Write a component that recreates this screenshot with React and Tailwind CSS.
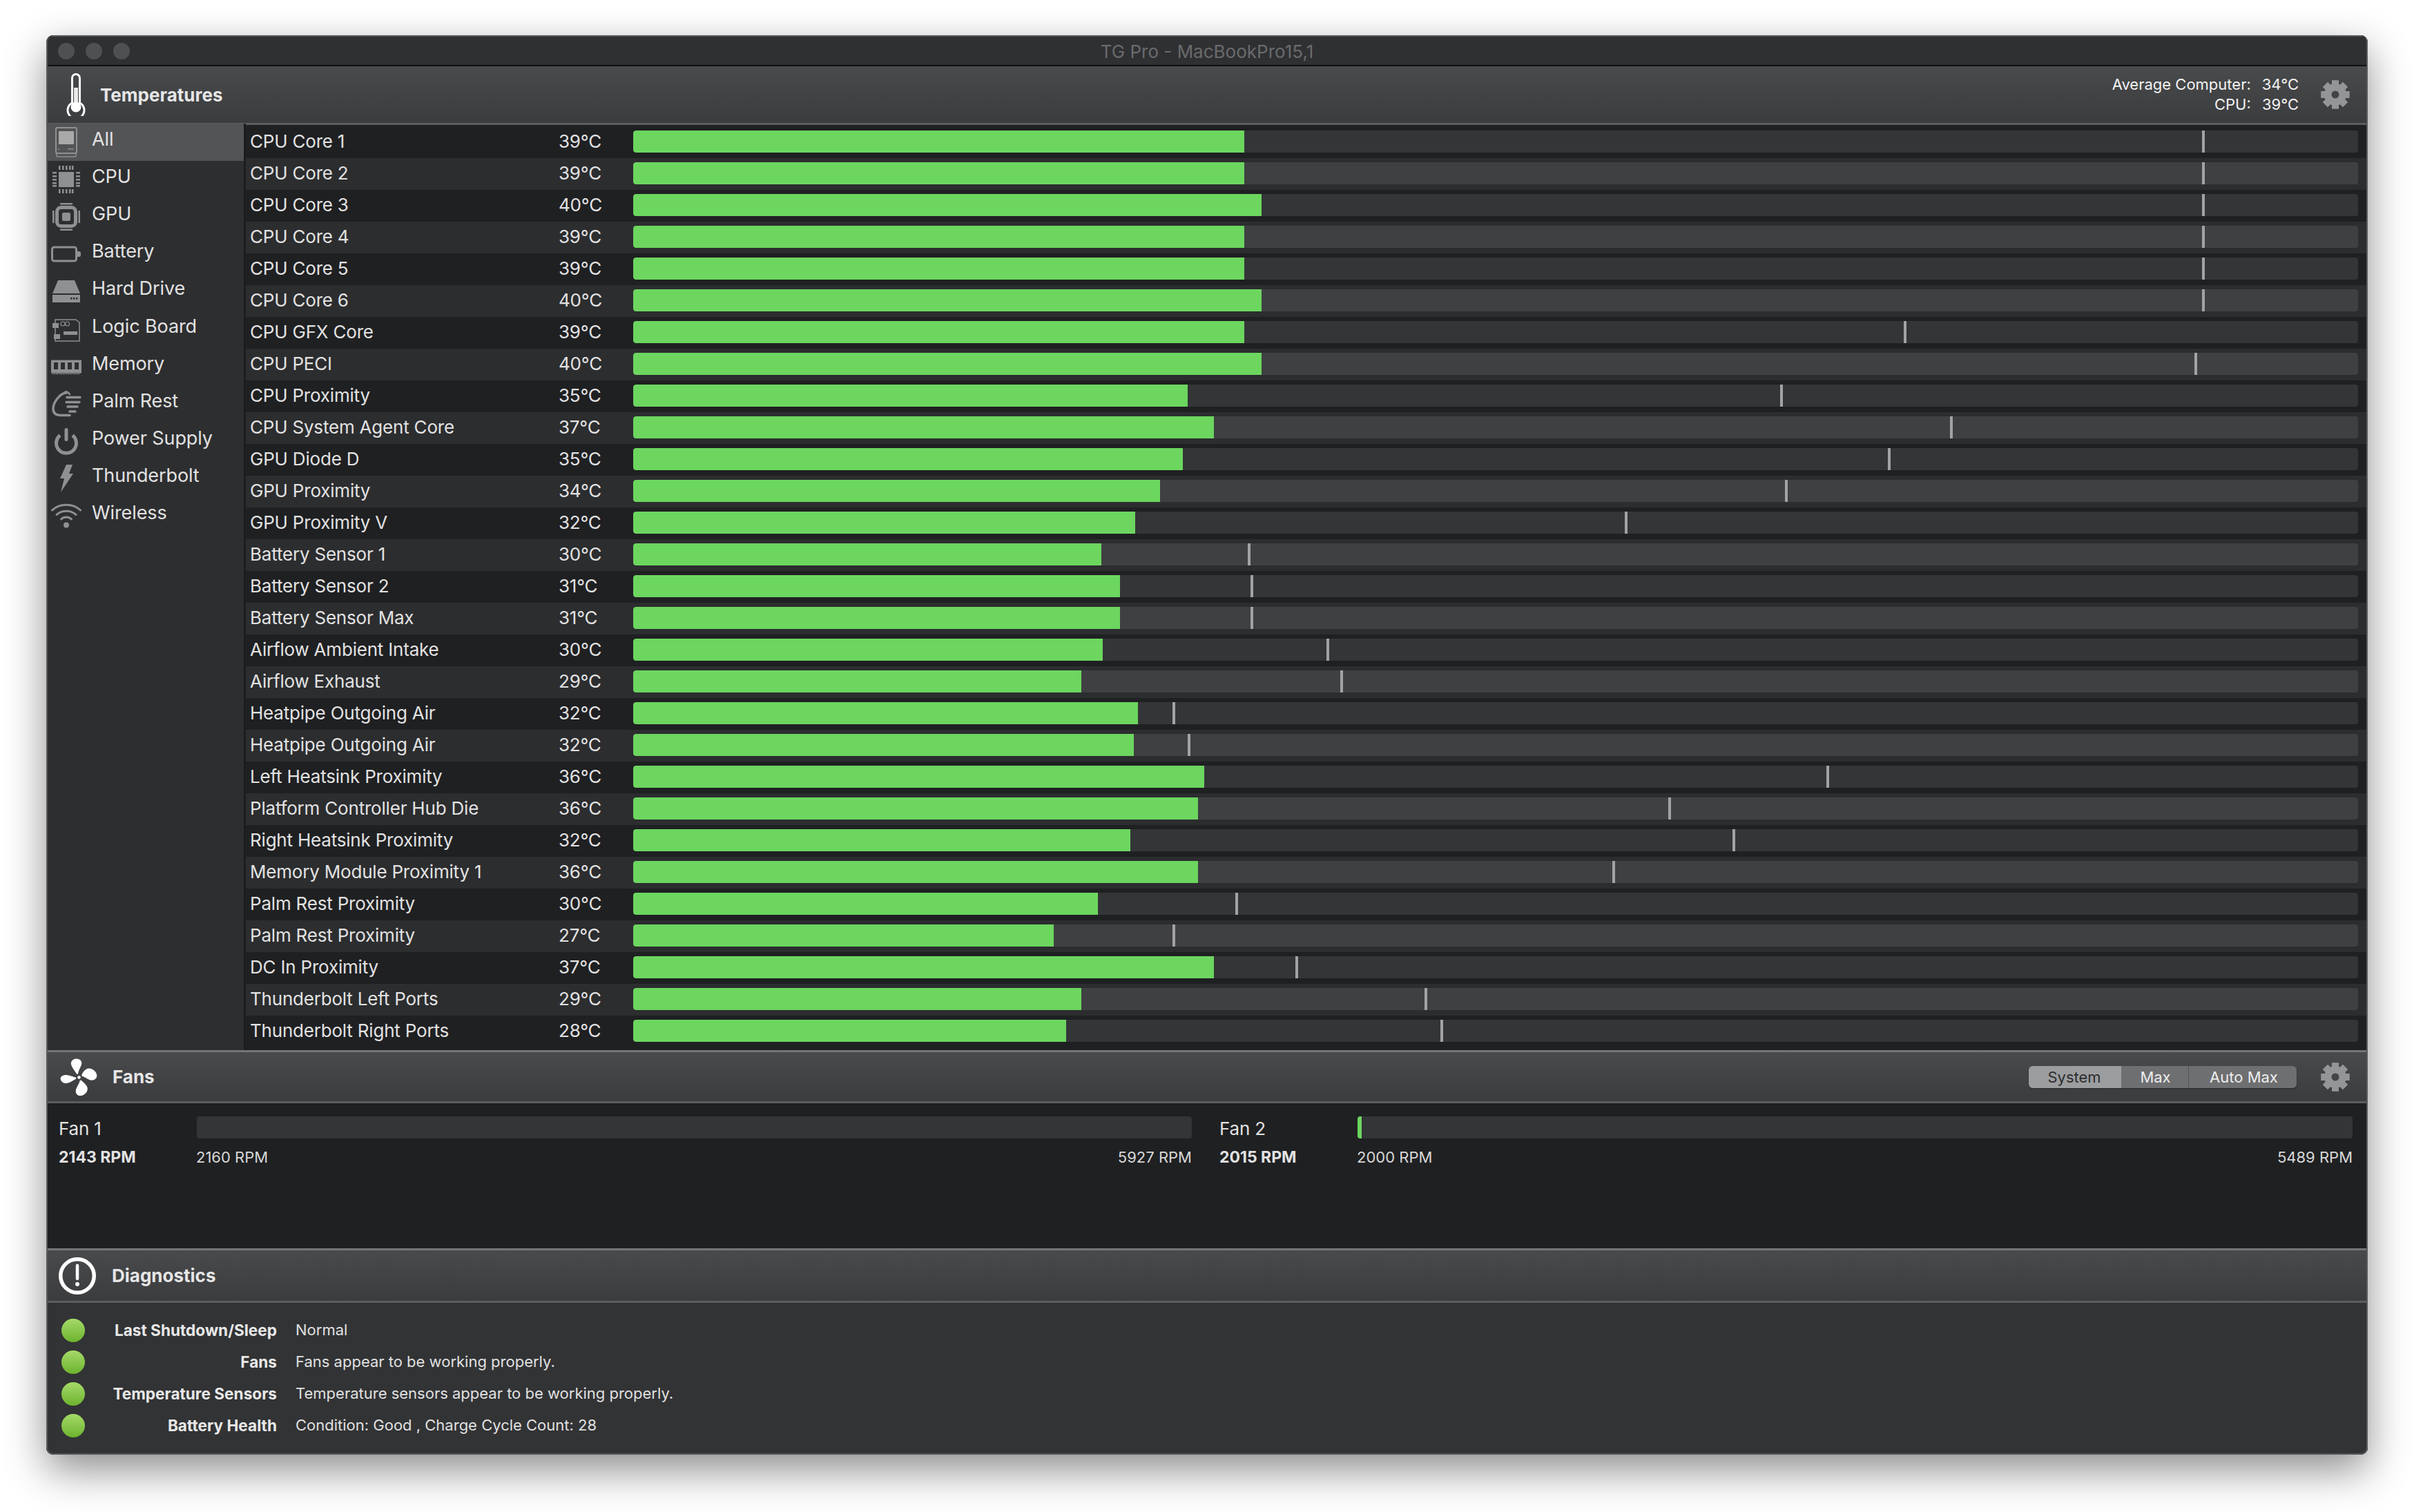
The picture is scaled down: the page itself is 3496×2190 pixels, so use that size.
import React from "react";

const rows = [
  ["CPU Core 1","39°C",808,1431],["CPU Core 2","39°C",808,1431],["CPU Core 3","40°C",819,1431],
  ["CPU Core 4","39°C",808,1431],["CPU Core 5","39°C",808,1431],["CPU Core 6","40°C",819,1431],
  ["CPU GFX Core","39°C",808,1237],["CPU PECI","40°C",819,1426],["CPU Proximity","35°C",771,1157],
  ["CPU System Agent Core","37°C",788,1267],["GPU Diode D","35°C",768,1227],["GPU Proximity","34°C",753,1160],
  ["GPU Proximity V","32°C",737,1056],["Battery Sensor 1","30°C",715,811],["Battery Sensor 2","31°C",727,813],
  ["Battery Sensor Max","31°C",727,813],["Airflow Ambient Intake","30°C",716,862],["Airflow Exhaust","29°C",702,871],
  ["Heatpipe Outgoing Air","32°C",739,762],["Heatpipe Outgoing Air","32°C",736,772],["Left Heatsink Proximity","36°C",782,1187],
  ["Platform Controller Hub Die","36°C",778,1084],["Right Heatsink Proximity","32°C",734,1126],["Memory Module Proximity 1","36°C",778,1048],
  ["Palm Rest Proximity","30°C",713,803],["Palm Rest Proximity","27°C",684,762],["DC In Proximity","37°C",788,842],
  ["Thunderbolt Left Ports","29°C",702,926],["Thunderbolt Right Ports","28°C",692,936],
];

const C = "#8f9092";
const Ic = ({ children }) => (
  <svg width="44" height="44" viewBox="0 0 44 44" fill="none" className="shrink-0">{children}</svg>
);
const Rep = ({ xs, y, w, h }) => xs.map((x) => <rect key={x} x={x} y={y} width={w} height={h} fill={C} />);

const icons = {
  All: (
    <Ic>
      <rect x="7" y="1" width="30" height="37" rx="2" stroke={C} strokeWidth="2" />
      <rect x="8" y="38" width="28" height="5" rx="1" stroke={C} strokeWidth="1.5" />
      <rect x="11" y="6" width="22" height="19" rx="1" fill="#a9a9aa" />
      <rect x="10" y="31" width="2" height="1.5" fill={C} />
      <rect x="24" y="31" width="9" height="1.5" fill={C} />
    </Ic>
  ),
  CPU: (
    <Ic>
      <rect x="11" y="11" width="22" height="22" fill={C} />
      <Rep xs={[11, 16, 21, 26, 30]} y="2" w="2.5" h="6" />
      <Rep xs={[11, 16, 21, 26, 30]} y="36" w="2.5" h="6" />
      {[12, 17, 22, 27, 31].map((y) => (
        <g key={y}>
          <rect x="2" y={y - 1} width="6" height="2.5" fill={C} />
          <rect x="36" y={y - 1} width="6" height="2.5" fill={C} />
        </g>
      ))}
    </Ic>
  ),
  GPU: (
    <Ic>
      <rect x="8.5" y="8.5" width="27" height="27" rx="6" stroke={C} strokeWidth="5" />
      <rect x="16" y="16" width="12" height="12" rx="2" fill={C} />
      <rect x="13" y="2" width="18" height="2.5" fill={C} />
      <rect x="13" y="39.5" width="18" height="2.5" fill={C} />
      <rect x="2" y="13" width="2.5" height="18" fill={C} />
      <rect x="39.5" y="13" width="2.5" height="18" fill={C} />
    </Ic>
  ),
  Battery: (
    <Ic>
      <rect x="1.5" y="12" width="35" height="20" rx="3" stroke={C} strokeWidth="3" />
      <path d="M38 18h2.5a2.5 2.5 0 0 1 2.5 2.5v3a2.5 2.5 0 0 1-2.5 2.5H38z" fill={C} />
    </Ic>
  ),
  "Hard Drive": (
    <Ic>
      <path d="M10 6h24l8 19H2z" fill={C} />
      <rect x="2" y="27" width="40" height="11" fill={C} />
      <rect x="28" y="31" width="2.5" height="2.5" fill="#2d2e30" />
      <rect x="32" y="31" width="2.5" height="2.5" fill="#2d2e30" />
      <rect x="36" y="31" width="2.5" height="2.5" fill="#2d2e30" />
    </Ic>
  ),
  "Logic Board": (
    <Ic>
      <path d="M6 8h30l5 4v27H6z" stroke={C} strokeWidth="1.5" />
      <rect x="2" y="13" width="9" height="7" fill={C} />
      <rect x="4" y="29" width="9" height="7" fill={C} />
      <circle cx="17" cy="14" r="3" stroke={C} strokeWidth="1.2" />
      <circle cx="23.5" cy="14" r="3" stroke={C} strokeWidth="1.2" />
      <rect x="18" y="25" width="20" height="5" fill={C} />
    </Ic>
  ),
  Memory: (
    <Ic>
      <path d="M0 12.5h44v19H0z" fill={C} />
      <rect x="4" y="16" width="6" height="10" fill="#2d2e30" />
      <rect x="14" y="16" width="6" height="10" fill="#2d2e30" />
      <rect x="24" y="16" width="6" height="10" fill="#2d2e30" />
      <rect x="34" y="16" width="6" height="10" fill="#2d2e30" />
      <path d="M2 32.5h40" stroke={C} strokeWidth="1.5" strokeDasharray="1.5 1" />
    </Ic>
  ),
  "Palm Rest": (
    <Ic>
      <path d="M22 6C14 6 3 19 3 29c0 7 5 9.5 11 9.5h13" stroke={C} strokeWidth="3.5" strokeLinecap="round" />
      <path d="M19 6.5c1-2 3-2.5 5-1.5l3 3" stroke={C} strokeWidth="2.5" strokeLinecap="round" />
      <path d="M23 12.5h19M22 19.5h19M24 26h14M27 33h8" stroke={C} strokeWidth="3.5" strokeLinecap="round" />
    </Ic>
  ),
  "Power Supply": (
    <Ic>
      <path d="M13 13.5a14.5 14.5 0 1 0 18 0" stroke={C} strokeWidth="5" strokeLinecap="butt" />
      <rect x="19.5" y="3" width="5" height="19" rx="2.5" fill={C} />
    </Ic>
  ),
  Thunderbolt: (
    <Ic>
      <path d="M22 2h9l-5 13h6L14 42l5-20h-6z" fill={C} />
    </Ic>
  ),
  Wireless: (
    <Ic>
      <path d="M1.5 14C12 3.5 32 3.5 42.5 14" stroke={C} strokeWidth="3" strokeLinecap="round" />
      <path d="M8 20.5C15 13.5 29 13.5 36 20.5" stroke={C} strokeWidth="3" strokeLinecap="round" />
      <path d="M14.5 27c4-4 11-4 15 0" stroke={C} strokeWidth="3" strokeLinecap="round" />
      <circle cx="22" cy="35.5" r="4" fill={C} />
    </Ic>
  ),
};

const Gear = () => (
  <svg width="42" height="42" viewBox="0 0 42 42" className="shrink-0">
    <g fill="#949597">
      {[0, 45, 90, 135, 180, 225, 270, 315].map((a) => (
        <rect key={a} x="16" y="0.5" width="10" height="41" transform={`rotate(${a} 21 21)`} />
      ))}
      <circle cx="21" cy="21" r="16" />
    </g>
    <circle cx="21" cy="21" r="5.5" fill="#434446" />
  </svg>
);

const Thermo = () => (
  <svg width="28" height="62" viewBox="0 0 28 62" fill="none" className="shrink-0">
    <path d="M8.5 7a5.5 5.5 0 0 1 11 0v36a12 12 0 1 1-11 0z" stroke="#fff" strokeWidth="3" />
    <rect x="11" y="21" width="6" height="26" fill="#e9e9e9" />
    <circle cx="14" cy="49" r="7.5" fill="#fff" />
  </svg>
);

const Fan = () => (
  <svg width="57" height="58" viewBox="30 15 170 175" fill="#fff" className="shrink-0">
    <path d="M108 90C100 75 85 60 83 45C82 30 95 22 110 23C125 24 133 35 128 50C124 62 115 75 113 90Z" />
    <path d="M130 92C135 80 145 68 158 65C175 62 197 80 196 98C195 112 178 120 165 115C152 110 140 100 130 98Z" />
    <path d="M128 117C140 130 156 140 155 155C154 172 135 186 120 184C105 182 100 165 106 152C112 140 120 128 122 117Z" />
    <path d="M105 110C92 118 78 128 62 130C48 131 36 120 37 108C38 96 55 92 68 94C82 96 95 102 105 105Z" />
    <circle cx="118" cy="104" r="7" />
  </svg>
);

const Warn = () => (
  <svg width="54" height="54" viewBox="0 0 54 54" fill="none" className="shrink-0">
    <circle cx="27" cy="27" r="24.25" stroke="#fff" strokeWidth="5.5" />
    <path d="M27 12v19" stroke="#fff" strokeWidth="4.5" strokeLinecap="round" />
    <circle cx="27" cy="39" r="3" fill="#fff" />
  </svg>
);

const headerBg = "bg-gradient-to-b from-[#484a4c] to-[#3b3c3e]";
const TITLE = "font-bold text-[26px] text-[#e6e6e6]";

export default function App() {
  return (
    <div
      className="h-[2190px] w-[3496px] overflow-hidden bg-white pl-[67px] pt-[51px] text-[#e4e4e4]"
      style={{ fontFamily: "Inter, 'Liberation Sans', sans-serif" }}
    >
      <div className="relative flex h-[2056px] w-[3362px] flex-col overflow-hidden rounded-[10px] bg-[#2d2e30] shadow-[0_22px_60px_rgba(0,0,0,0.45)]">
        {/* Title bar */}
        <div className="relative flex h-[45px] shrink-0 items-center gap-4 border-b-2 border-[#0f0f10] border-t-2 border-t-[#5a5b5d] bg-[#2f3032] pl-[17px]">
          <span className="h-6 w-6 rounded-full bg-[#4f5052]" />
          <span className="h-6 w-6 rounded-full bg-[#4f5052]" />
          <span className="h-6 w-6 rounded-full bg-[#4f5052]" />
          <span className="absolute inset-x-0 top-[7px] text-center text-[26px] leading-[30px] text-[#6a6b6d]">TG Pro - MacBookPro15,1</span>
        </div>

        {/* Temperatures header */}
        <div className={`flex h-[85px] shrink-0 items-center border-b-[3px] border-[#5c5d5f] pl-[29px] pr-[26px] ${headerBg}`}>
          <Thermo />
          <span className={`ml-[21px] ${TITLE}`}>Temperatures</span>
          <div className="ml-auto mr-[32px] grid grid-cols-[auto_auto] gap-x-[16px] text-right text-[22px] leading-[29px] text-[#f2f2f2]">
            <span>Average Computer:</span><span>34°C</span>
            <span>CPU:</span><span>39°C</span>
          </div>
          <Gear />
        </div>

        {/* Body */}
        <div className="flex h-[1340px] shrink-0">
          <div className="-mt-[2px] w-[289px] shrink-0 border-r-[3px] border-[#1c1d1f]">
            {Object.keys(icons).map((name, i) => (
              <div key={name} className={`flex h-[54.1px] items-center gap-[15px] pl-[7px] ${i === 0 ? "bg-[#535456]" : ""}`}>
                {icons[name]}
                <span className="pb-[8px] text-[27px] leading-[34px] tracking-[-0.1px] text-[#e2e2e2]">{name}</span>
              </div>
            ))}
          </div>
          <div className="flex-1 bg-[#1f2022] pt-[2px]">
            {rows.map(([name, temp, end, tick], i) => {
              const odd = i % 2 === 0;
              return (
                <div key={i} className={`flex h-[46px] items-start pl-[6px] pr-[14px] pt-[6px] ${odd ? "bg-[#1f2022]" : "bg-[#2c2d2f]"}`}>
                  <span className="w-[447px] shrink-0 text-[26px] leading-[32px] tracking-[-0.2px] text-[#e2e2e2]">{name}</span>
                  <span className="w-[108px] shrink-0 text-[26px] leading-[32px] tracking-[-0.2px] text-[#e2e2e2]">{temp}</span>
                  <div className={`relative h-[32px] flex-1 overflow-hidden rounded-[4px] ${odd ? "bg-[#343537]" : "bg-[#3f4042]"}`}>
                    <div className="h-full rounded-l-[4px] bg-[#6cd65f]" style={{ width: `${(end - 411) * 2.2296}px` }} />
                    <div className="absolute inset-y-0 w-[4px] bg-[#a3a3a4]" style={{ left: `${(tick - 411) * 2.2296 - 2}px` }} />
                  </div>
                </div>
              );
            })}
          </div>
        </div>

        {/* Fans header */}
        <div className={`flex h-[77px] shrink-0 items-center border-y-[3px] border-t-[#747577] border-b-[#5c5d5f] pl-[18px] pr-[26px] ${headerBg}`}>
          <Fan />
          <span className={`ml-[21px] ${TITLE}`}>Fans</span>
          <div className="ml-auto mr-[35px] flex h-[32px] overflow-hidden rounded-[6px] text-[22px] leading-[32px] shadow-[0_1px_2px_rgba(0,0,0,0.4)]">
            <span className="w-[134px] bg-[#9c9d9f] pr-[2px] text-center text-[#2c2d2e]">System</span>
            <span className="w-[98px] border-r border-[#56575a] bg-[#6e6f71] pl-[2px] text-center text-[#ededed]">Max</span>
            <span className="w-[156px] bg-[#6e6f71] pl-[3px] text-center text-[#ededed]">Auto Max</span>
          </div>
          <Gear />
        </div>

        {/* Fans content */}
        <div className="flex h-[210px] shrink-0 gap-[40px] bg-[#1f2022] pl-[18px] pr-[22px] pt-[19px]">
          {[
            ["Fan 1", "2143 RPM", "2160 RPM", "5927 RPM", 0],
            ["Fan 2", "2015 RPM", "2000 RPM", "5489 RPM", 6],
          ].map(([n, cur, lo, hi, w]) => (
            <div key={n} className="grid flex-1 grid-cols-[200px_1fr] content-start gap-y-[12px]">
              <span className="mt-[2px] text-[26px] leading-[32px] tracking-[-0.2px] text-[#e2e2e2]">{n}</span>
              <div className="h-[32px] overflow-hidden rounded-[4px] bg-[#343537]">
                <div className="h-full bg-[#6cd65f]" style={{ width: `${w}px` }} />
              </div>
              <span className="text-[23px] font-bold leading-[26px] text-[#e2e2e2]">{cur}</span>
              <div className="flex justify-between text-[22px] leading-[26px] text-[#d8d8d8]">
                <span className="-ml-[1px]">{lo}</span><span>{hi}</span>
              </div>
            </div>
          ))}
        </div>

        {/* Diagnostics header */}
        <div className={`flex h-[79px] shrink-0 items-center border-y-[3px] border-t-[#747577] border-b-[#5c5d5f] pl-[18px] ${headerBg}`}>
          <Warn />
          <span className={`ml-[23px] ${TITLE}`}>Diagnostics</span>
        </div>

        {/* Diagnostics content */}
        <div className="flex-1 bg-[#323335] pt-[17px]">
          {[
            ["Last Shutdown/Sleep", "Normal"],
            ["Fans", "Fans appear to be working properly."],
            ["Temperature Sensors", "Temperature sensors appear to be working properly."],
            ["Battery Health", "Condition: Good , Charge Cycle Count: 28"],
          ].map(([k, v]) => (
            <div key={k} className="flex h-[46px] items-center pl-[22px] text-[22px]">
              <span className="h-[34px] w-[34px] shrink-0 rounded-full bg-gradient-to-b from-[#a5da68] to-[#6cb32c]" />
              <span className="w-[278px] shrink-0 pb-[1px] text-right text-[22.6px] font-bold text-[#e8e8e8]">{k}</span>
              <span className="ml-[27px] pb-[1px] text-[#e0e0e0]">{v}</span>
            </div>
          ))}
        </div>

        {/* Window edge */}
        <div className="pointer-events-none absolute inset-0 rounded-[10px] border-x-2 border-b-2 border-[#58595b]" />
      </div>
    </div>
  );
}
